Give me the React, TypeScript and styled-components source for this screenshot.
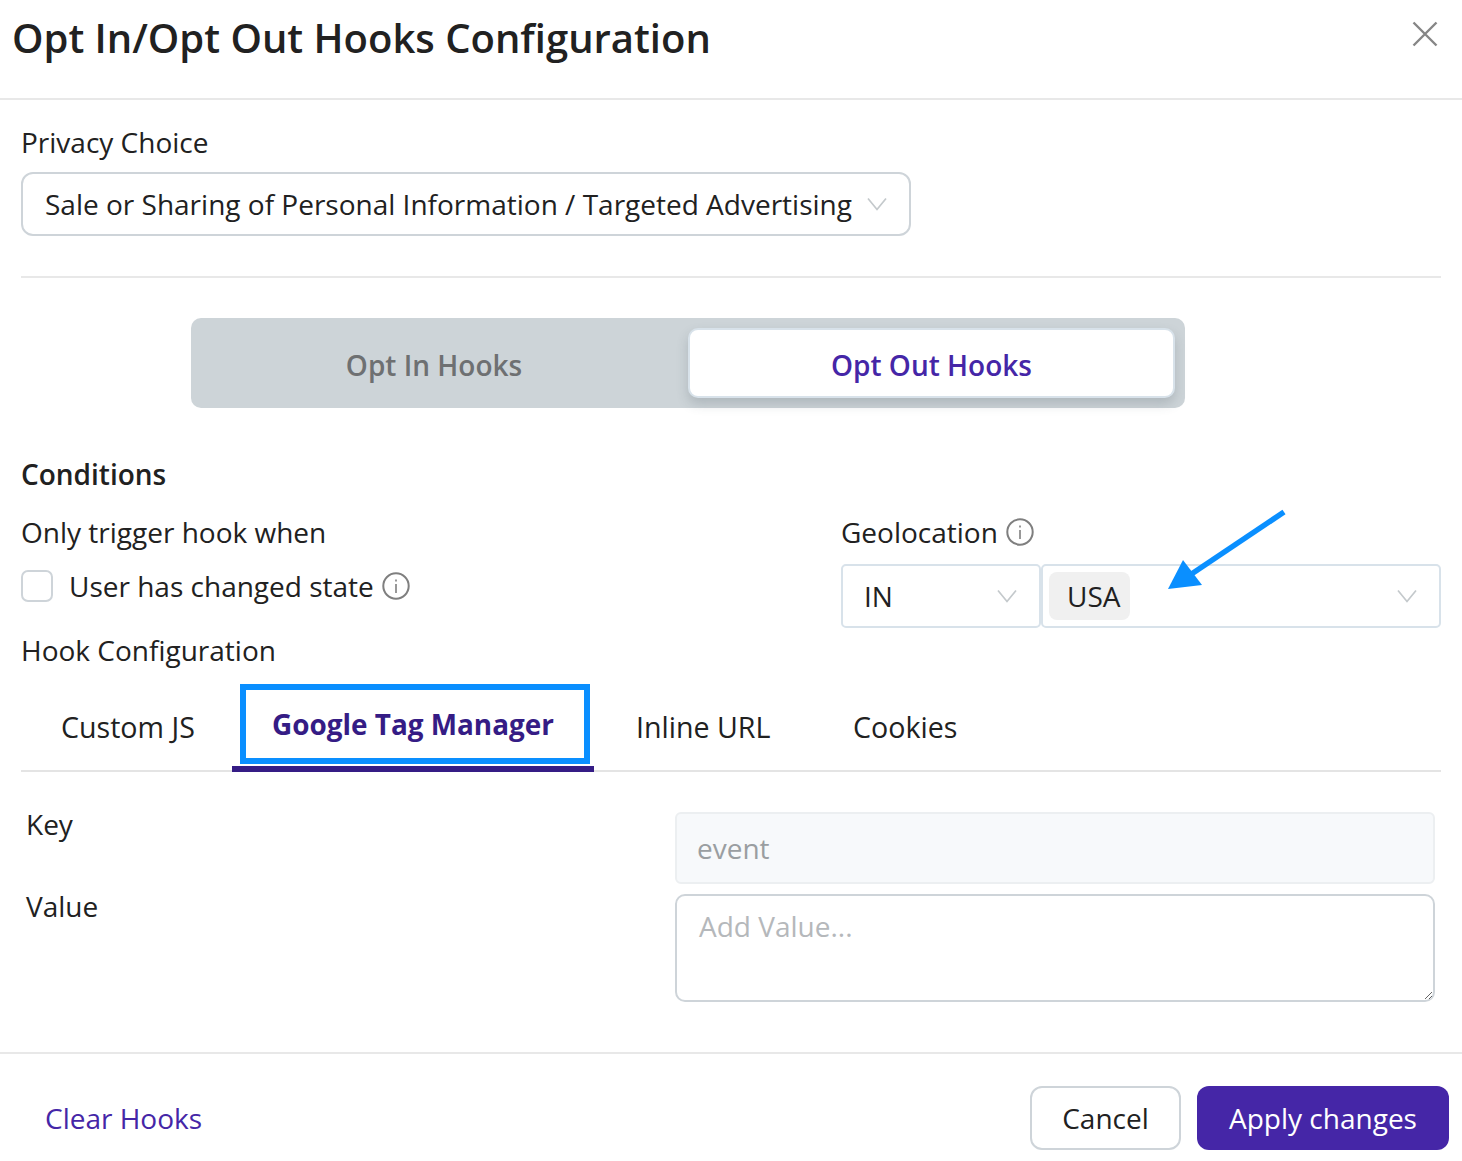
import React from 'react'
import styled, { createGlobalStyle } from 'styled-components'

const GlobalStyle = createGlobalStyle`
	html, body {
		margin: 0;
		padding: 0;
		background: #fff;
	}
	body {
		font-family: 'Open Sans', 'Liberation Sans', sans-serif;
		color: #212121;
	}
`

const Chevron = () => (
	<ChevronSvg viewBox="0 0 20 14" fill="none">
		<path d="M1 1.5 L10 12.5 L19 1.5" stroke="#c4c9cc" strokeWidth="1.7" />
	</ChevronSvg>
)

const InfoIcon = () => (
	<InfoSvg viewBox="0 0 28 28" fill="none">
		<circle cx="14" cy="14" r="12.7" stroke="#7f7f7f" strokeWidth="2" />
		<rect x="13.2" y="12" width="1.6" height="9" fill="#7f7f7f" />
		<rect x="13.2" y="7.5" width="1.6" height="2" fill="#7f7f7f" />
	</InfoSvg>
)

const App: React.FC = () => {
	return (
		<Page>
			<GlobalStyle />
			<Header>
				<Title>Opt In/Opt Out Hooks Configuration</Title>
				<CloseIcon viewBox="0 0 26 26" fill="none">
					<path d="M1.5 1.5 L24.5 24.5 M24.5 1.5 L1.5 24.5" stroke="#868686" strokeWidth="2.4" />
				</CloseIcon>
			</Header>
			<Body>
				<PrivacyLabel>Privacy Choice</PrivacyLabel>
				<PrivacySelect>
					<span>Sale or Sharing of Personal Information / Targeted Advertising</span>
					<Chevron />
				</PrivacySelect>
				<Divider />
				<Toggle>
					<ToggleOption>Opt In Hooks</ToggleOption>
					<ToggleOption $active>Opt Out Hooks</ToggleOption>
				</Toggle>
				<SectionTitle>Conditions</SectionTitle>
				<Conditions>
					<div>
						<RowLabel>Only trigger hook when</RowLabel>
						<CheckRow>
							<Checkbox />
							<span>User has changed state</span>
							<InfoIcon />
						</CheckRow>
					</div>
					<GeoColumn>
						<RowLabel>
							Geolocation <InfoIcon />
						</RowLabel>
						<GeoSelects>
							<GeoSelect $width={200}>
								<GeoValue>IN</GeoValue>
								<Chevron />
							</GeoSelect>
							<GeoSelect $width={400}>
								<Chip>USA</Chip>
								<Chevron />
							</GeoSelect>
							<Arrow viewBox="0 0 120 84" fill="none">
								<path d="M116 4 L22 67" stroke="#0a8fff" strokeWidth="5.5" />
								<polygon points="0,81 15,52 34,77" fill="#0a8fff" />
							</Arrow>
						</GeoSelects>
					</GeoColumn>
				</Conditions>
				<HookLabel>Hook Configuration</HookLabel>
				<Tabs>
					<Tab $width={211} $inset={40}>Custom JS</Tab>
					<ActiveTab>
						Google Tag Manager
						<Highlight />
					</ActiveTab>
					<Tab $width={217} $inset={42}>Inline URL</Tab>
					<Tab $width={190} $inset={42}>Cookies</Tab>
				</Tabs>
				<Fields>
					<KeyRow>
						<FieldLabel>Key</FieldLabel>
						<KeyInput disabled value="event" readOnly />
					</KeyRow>
					<ValueRow>
						<FieldLabel>Value</FieldLabel>
						<ValueInput placeholder="Add Value..." />
					</ValueRow>
				</Fields>
			</Body>
			<Footer>
				<ClearLink>Clear Hooks</ClearLink>
				<Actions>
					<CancelButton>Cancel</CancelButton>
					<ApplyButton>Apply changes</ApplyButton>
				</Actions>
			</Footer>
		</Page>
	)
}

const Page = styled.div`
	width: 1462px;
	height: 1161px;
	overflow: hidden;
	font-size: 28px;
	line-height: 40px;
`
const Header = styled.header`
	display: flex;
	justify-content: space-between;
	height: 98px;
	padding: 0 13px 0 12px;
	border-bottom: 2px solid #e8e8e8;
`
const Title = styled.h1`
	margin: 14px 0 0;
	font-size: 40px;
	line-height: 48px;
	font-weight: 600;
	color: #212121;
`
const CloseIcon = styled.svg`
	width: 26px;
	height: 26px;
	margin: 21px 11px 0 0;
`
const Body = styled.main`
	display: flex;
	flex-direction: column;
	height: 952px;
	padding: 0 21px;
	box-sizing: border-box;
`
const PrivacyLabel = styled.div`
	margin-top: 22px;
`
const PrivacySelect = styled.div`
	display: flex;
	align-items: center;
	justify-content: space-between;
	box-sizing: border-box;
	width: 890px;
	height: 64px;
	margin-top: 10px;
	padding: 0 22px;
	border: 2px solid #ced4d9;
	border-radius: 12px;
	white-space: nowrap;
`
const ChevronSvg = styled.svg`
	flex: none;
	width: 20px;
	height: 14px;
`
const InfoSvg = styled.svg`
	flex: none;
	width: 28px;
	height: 28px;
`
const Divider = styled.div`
	height: 2px;
	margin-top: 40px;
	background: #e8e8e8;
`
const Toggle = styled.div`
	display: flex;
	align-items: center;
	box-sizing: border-box;
	width: 994px;
	height: 90px;
	margin: 40px 0 0 170px;
	padding: 10px;
	background: #cdd4d8;
	border-radius: 10px;
`
const ToggleOption = styled.div<{ $active?: boolean }>`
	display: flex;
	align-items: center;
	justify-content: center;
	flex: none;
	box-sizing: border-box;
	width: 487px;
	height: 70px;
	padding: ${(p) => (p.$active ? '4px 0 0' : '4px 21px 0 0')};
	font-weight: 600;
	color: ${(p) => (p.$active ? '#4526a7' : '#6e7072')};
	background: ${(p) => (p.$active ? '#fff' : 'transparent')};
	border: ${(p) => (p.$active ? '2px solid #d8e2ea' : 'none')};
	border-radius: 10px;
	box-shadow: ${(p) => (p.$active ? '0 6px 12px rgba(70, 80, 90, 0.22)' : 'none')};
`
const SectionTitle = styled.div`
	margin-top: 46px;
	font-weight: 600;
`
const Conditions = styled.div`
	display: flex;
	justify-content: space-between;
	margin-top: 18px;
`
const RowLabel = styled.div`
	display: flex;
	align-items: center;
	gap: 8px;
`
const CheckRow = styled.div`
	display: flex;
	align-items: center;
	margin-top: 14px;

	& > span {
		margin: 0 8px 0 16px;
	}
`
const Checkbox = styled.div`
	box-sizing: border-box;
	width: 32px;
	height: 32px;
	border: 2px solid #ced4d9;
	border-radius: 7px;
`
const GeoColumn = styled.div`
	width: 600px;
`
const GeoSelects = styled.div`
	position: relative;
	display: flex;
	margin-top: 12px;
`
const GeoSelect = styled.div<{ $width: number }>`
	display: flex;
	align-items: center;
	justify-content: space-between;
	box-sizing: border-box;
	width: ${(p) => p.$width}px;
	height: 64px;
	padding: 0 22px 0 6px;
	border: 2px solid #d8e2ea;
	border-radius: 5px;
`
const GeoValue = styled.span`
	margin-left: 15px;
`
const Chip = styled.span`
	padding: 4px 10px 4px 18px;
	background: #f0f0f0;
	border-radius: 8px;
`
const Arrow = styled.svg`
	position: absolute;
	left: 327px;
	top: -56px;
	width: 120px;
	height: 84px;
`
const HookLabel = styled.div`
	margin-top: 2px;
`
const Tabs = styled.div`
	display: flex;
	box-sizing: border-box;
	height: 88px;
	margin-top: 14px;
	font-size: 28.6px;
	border-bottom: 2px solid #e4e4e4;
`
const Tab = styled.div<{ $width: number; $inset: number }>`
	box-sizing: border-box;
	width: ${(p) => p.$width}px;
	padding: 23px 0 0 ${(p) => p.$inset}px;
`
const ActiveTab = styled.div`
	position: relative;
	flex: none;
	box-sizing: border-box;
	width: 362px;
	height: 88px;
	padding: 20px 0 0 40px;
	font-size: 27.9px;
	font-weight: 700;
	color: #351c85;
	border-bottom: 6px solid #351c85;
`
const Highlight = styled.div`
	position: absolute;
	left: 8px;
	top: 0;
	box-sizing: border-box;
	width: 350px;
	height: 80px;
	border: 6px solid #0a8fff;
`
const Fields = styled.div`
	display: flex;
	flex-direction: column;
	gap: 10px;
	margin-top: 40px;
	padding: 0 6px 0 5px;
`
const KeyRow = styled.div`
	display: flex;
	justify-content: space-between;
	height: 72px;
`
const ValueRow = styled.div`
	display: flex;
	justify-content: space-between;
	height: 108px;
`
const FieldLabel = styled.div`
	margin-top: -8px;
`
const KeyInput = styled.input`
	box-sizing: border-box;
	width: 760px;
	height: 72px;
	padding: 0 20px;
	font: inherit;
	color: #9a9ea1;
	-webkit-text-fill-color: #9a9ea1;
	background: #f7f9fb;
	border: 2px solid #eceff1;
	border-radius: 6px;
	outline: none;
`
const ValueInput = styled.textarea`
	box-sizing: border-box;
	width: 760px;
	height: 108px;
	padding: 10px 22px;
	font: inherit;
	line-height: 40px;
	background: #fff;
	border: 2px solid #ced4d9;
	border-radius: 10px;
	outline: none;

	&::placeholder {
		color: #b5b8bb;
	}
`
const Footer = styled.footer`
	display: flex;
	align-items: flex-start;
	justify-content: space-between;
	box-sizing: border-box;
	height: 111px;
	padding: 32px 13px 0 45px;
	border-top: 2px solid #e8e8e8;
`
const ClearLink = styled.a`
	margin-top: 12px;
	color: #4526a7;
`
const Actions = styled.div`
	display: flex;
	gap: 16px;
`
const CancelButton = styled.button`
	box-sizing: border-box;
	width: 151px;
	height: 64px;
	padding: 0;
	font: inherit;
	color: #212121;
	background: #fff;
	border: 2px solid #ced4d9;
	border-radius: 12px;
`
const ApplyButton = styled.button`
	box-sizing: border-box;
	width: 252px;
	height: 64px;
	padding: 0;
	font: inherit;
	color: #fff;
	background: #4526a7;
	border: none;
	border-radius: 12px;
`

export default App
